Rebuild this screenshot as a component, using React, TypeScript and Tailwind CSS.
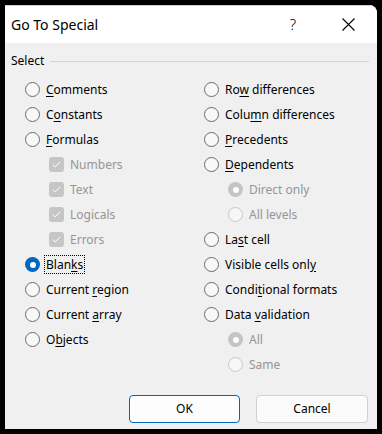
import React from "react";

type Item = {
  label: string;
  ul?: number;
  kind: "radio" | "check" | "subradio";
  checked?: boolean;
  disabled?: boolean;
  focus?: boolean;
};

const left: Item[] = [
  { label: "Comments", ul: 0, kind: "radio" },
  { label: "Constants", ul: 1, kind: "radio" },
  { label: "Formulas", ul: 0, kind: "radio" },
  { label: "Numbers", kind: "check", checked: true, disabled: true },
  { label: "Text", kind: "check", checked: true, disabled: true },
  { label: "Logicals", kind: "check", checked: true, disabled: true },
  { label: "Errors", kind: "check", checked: true, disabled: true },
  { label: "Blanks", ul: 4, kind: "radio", checked: true, focus: true },
  { label: "Current region", ul: 8, kind: "radio" },
  { label: "Current array", ul: 8, kind: "radio" },
  { label: "Objects", ul: 1, kind: "radio" },
];

const right: Item[] = [
  { label: "Row differences", ul: 2, kind: "radio" },
  { label: "Column differences", ul: 4, kind: "radio" },
  { label: "Precedents", ul: 0, kind: "radio" },
  { label: "Dependents", ul: 0, kind: "radio" },
  { label: "Direct only", kind: "subradio", checked: true, disabled: true },
  { label: "All levels", kind: "subradio", disabled: true },
  { label: "Last cell", ul: 2, kind: "radio" },
  { label: "Visible cells only", ul: 17, kind: "radio" },
  { label: "Conditional formats", ul: 5, kind: "radio" },
  { label: "Data validation", ul: 5, kind: "radio" },
  { label: "All", kind: "subradio", checked: true, disabled: true },
  { label: "Same", kind: "subradio", disabled: true },
];

function Label({ text, ul }: { text: string; ul?: number }) {
  if (ul === undefined) return <>{text}</>;
  return (
    <>
      {text.slice(0, ul)}
      <span className="underline underline-offset-2">{text[ul]}</span>
      {text.slice(ul + 1)}
    </>
  );
}

function Mark({ item }: { item: Item }) {
  if (item.kind === "check") {
    return (
      <span className="flex h-[15px] w-[15px] items-center justify-center rounded-[3px] bg-[#c6c6c6]">
        <svg width="9" height="7" viewBox="0 0 9 7" fill="none">
          <path d="M0.8 3.6 L3.2 5.9 L8.2 0.9" stroke="white" strokeWidth="1" />
        </svg>
      </span>
    );
  }
  if (item.disabled) {
    return item.checked ? (
      <span className="flex h-[15px] w-[15px] items-center justify-center rounded-full bg-[#c4c4c4]">
        <span className="h-[6px] w-[6px] rounded-full bg-white" />
      </span>
    ) : (
      <span className="h-[15px] w-[15px] rounded-full border border-[#c8c8c8] bg-[#f6f6f6]" />
    );
  }
  return item.checked ? (
    <span className="flex h-[15px] w-[15px] items-center justify-center rounded-full bg-[#0067c0]">
      <span className="h-[6px] w-[6px] rounded-full bg-white" />
    </span>
  ) : (
    <span className="h-[15px] w-[15px] rounded-full border border-[#6b6b6b] bg-[#f8f8f8]" />
  );
}

function Row({ item }: { item: Item }) {
  const sub = item.kind !== "radio";
  return (
    <div className={`flex h-[25px] items-center ${sub ? "pl-[24px]" : ""}`}>
      <Mark item={item} />
      {item.focus ? (
        <span className="ml-[4px] border border-dotted border-black px-[1px] leading-[17px] text-black">
          <Label text={item.label} ul={item.ul} />
        </span>
      ) : (
        <span className={`ml-[6px] ${item.disabled ? "text-[#959595]" : "text-black"}`}>
          <Label text={item.label} ul={item.ul} />
        </span>
      )}
    </div>
  );
}

export default function App() {
  return (
    <div className="h-[434px] w-[382px] bg-black p-[5px] font-['Noto_Sans',sans-serif]">
      <div className="flex h-full w-full flex-col overflow-hidden rounded-tr-lg bg-[#f0f0f0]">
        <div className="flex h-[38px] items-center border-t border-[#cfcfcf] bg-white pl-[6px] pr-[22px]">
          <span className="text-[14px] text-black">Go To Special</span>
          <span className="ml-auto mr-[46px] text-[15px] font-light text-black">?</span>
          <svg width="13" height="13" viewBox="0 0 13 13" fill="none">
            <path d="M0.5 0.5 L12.5 12.5 M12.5 0.5 L0.5 12.5" stroke="black" strokeWidth="1.1" />
          </svg>
        </div>

        <div className="flex flex-1 flex-col px-[6px] pt-[9px] text-[12px]">
          <div className="flex items-center gap-[6px]">
            <span className="text-black">Select</span>
            <div className="mr-[2px] h-px flex-1 bg-[#d5d5d5]" />
          </div>

          <div className="mt-[7px] grid grid-cols-[179px_1fr] pl-[14px]">
            <div className="flex flex-col">
              {left.map((it) => (
                <Row key={it.label} item={it} />
              ))}
            </div>
            <div className="flex flex-col">
              {right.map((it) => (
                <Row key={it.label} item={it} />
              ))}
            </div>
          </div>

          <div className="mt-[18px] flex justify-end gap-[16px] pr-[3px]">
            <button className="h-[28px] w-[111px] rounded-[4px] border border-[#0067c0] bg-[#fdfdfd] text-black">
              OK
            </button>
            <button className="h-[28px] w-[112px] rounded-[4px] border border-[#d0d0d0] bg-[#fbfbfb] text-black">
              Cancel
            </button>
          </div>
        </div>
      </div>
    </div>
  );
}
